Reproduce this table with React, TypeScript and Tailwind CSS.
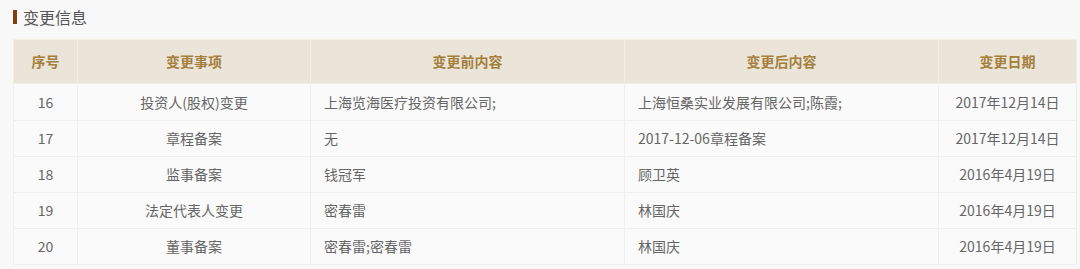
const rows = [
  ['16', '投资人(股权)变更', '上海览海医疗投资有限公司;', '上海恒桑实业发展有限公司;陈霞;', '2017年12月14日'],
  ['17', '章程备案', '无', '2017-12-06章程备案', '2017年12月14日'],
  ['18', '监事备案', '钱冠军', '顾卫英', '2016年4月19日'],
  ['19', '法定代表人变更', '密春雷', '林国庆', '2016年4月19日'],
  ['20', '董事备案', '密春雷;密春雷', '林国庆', '2016年4月19日'],
]

export default function App() {
  return (
    <div
      className="w-[1080px] h-[269px] bg-[#f8f8f8] pt-[7px] px-[13px]"
      style={{ fontFamily: '"Noto Sans CJK SC", "Noto Sans", sans-serif' }}
    >
      <div className="flex items-center gap-[6px] h-[20px]">
        <div className="w-[4px] h-[14px] bg-[#7f3f10]" />
        <span className="text-[16px] text-[#555] leading-none">变更信息</span>
      </div>
      <table className="mt-[12px] w-[1063px] table-fixed border-collapse text-[14px]">
        <colgroup>
          <col className="w-[64px]" />
          <col className="w-[233px]" />
          <col className="w-[314px]" />
          <col className="w-[314px]" />
          <col className="w-[138px]" />
        </colgroup>
        <thead>
          <tr className="h-[44px] bg-[#ebe4d9] text-[#a4803c] font-bold">
            <th className="border border-[#f3efe8] text-center">序号</th>
            <th className="border border-[#f3efe8] text-center">变更事项</th>
            <th className="border border-[#f3efe8] text-center">变更前内容</th>
            <th className="border border-[#f3efe8] text-center">变更后内容</th>
            <th className="border border-[#f3efe8] text-center">变更日期</th>
          </tr>
        </thead>
        <tbody className="bg-[#fafafa] text-[#666]">
          {rows.map((r, i) => (
            <tr key={r[0]} className={i === 0 ? 'h-[37px]' : 'h-[36px]'}>
              <td className="border border-[#efefef] text-center">{r[0]}</td>
              <td className="border border-[#efefef] text-center">{r[1]}</td>
              <td className="border border-[#efefef] px-[13px]">{r[2]}</td>
              <td className="border border-[#efefef] px-[13px]">{r[3]}</td>
              <td className="border border-[#efefef] text-center">{r[4]}</td>
            </tr>
          ))}
        </tbody>
      </table>
    </div>
  )
}
